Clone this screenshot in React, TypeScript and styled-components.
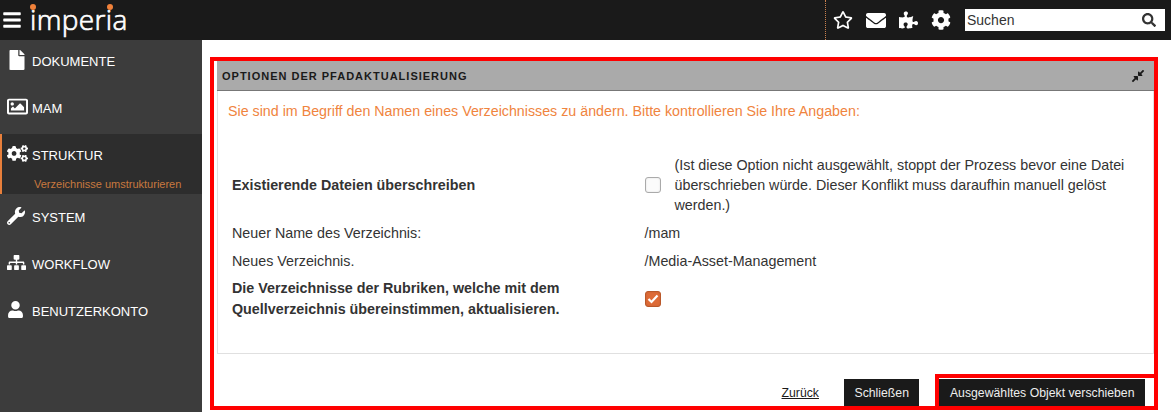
import React from "react";
import styled, { createGlobalStyle } from "styled-components";
import {
  FaBars, FaFile, FaRegImage, FaCogs, FaWrench, FaSitemap, FaUser, FaRegStar,
  FaEnvelope, FaPuzzlePiece, FaCog, FaSearch, FaCompressAlt,
} from "react-icons/fa";

const Global = createGlobalStyle`
  html, body { margin: 0; padding: 0; background: #fff; overflow: hidden; }
  body { font-family: "Liberation Sans", Arial, sans-serif; font-size: 14.3px; color: #333; }
`;
const Page = styled.div`width: 1171px; height: 412px; display: flex; flex-direction: column; overflow: hidden;`;
const TopBar = styled.header`
  height: 40px; flex: none; background: #1a1a1a; display: flex; align-items: center; color: #fff;
`;
const Burger = styled.div`width: 22px; margin-right: 8px; padding-left: 2px; box-sizing: border-box; display: flex; font-size: 20px;`;
const Logo = styled.div`
  position: relative; font-family: "Open Sans", sans-serif; font-weight: 300; font-size: 28px; line-height: 38px;
  letter-spacing: 0.35px; color: #fff; -webkit-text-stroke: 0.7px #fff; align-self: flex-start;
`;
const Dot = styled.i<{ $x: number }>`
  position: absolute; top: 4px; left: ${(p) => p.$x}px; width: 6px; height: 6px; border-radius: 50%; background: #f0813a;
`;
const Spacer = styled.div`flex: 1;`;
const Tools = styled.div`
  height: 40px; display: flex; align-items: center; border-left: 1px dotted #c9814f; padding-left: 7px; gap: 13px;
`;
const Tool = styled.span<{ $w: number }>`width: ${(p) => p.$w}px; display: flex; justify-content: center; font-size: 20px;`;
const Search = styled.div`
  margin: 0 6px 0 14px; width: 200px; height: 22px; background: #fff; display: flex; align-items: center;
  justify-content: space-between; padding: 0 9px 0 2px; box-sizing: border-box; color: #333; font-size: 14px;
`;
const Body = styled.div`flex: 1; display: flex; min-height: 0;`;
const Side = styled.nav`width: 202px; flex: none; background: #3c3c3c;`;
const Item = styled.div<{ $active?: boolean }>`
  height: ${(p) => (p.$active ? 60 : 47)}px; box-sizing: border-box; padding-top: 10px;
  margin-bottom: ${(p) => (p.$active ? 2 : 0)}px;
  background: ${(p) => (p.$active ? "#2d2d2d" : "transparent")};
  border-left: 2px solid ${(p) => (p.$active ? "#e87f3b" : "transparent")};
`;
const ItemRow = styled.div`
  display: flex; align-items: center; height: 22px; color: #fff; font-size: 13px; padding-left: 5px;
`;
const ItemIcon = styled.span<{ $size: number }>`
  width: 25px; display: flex; font-size: ${(p) => p.$size}px; margin-top: -3px; box-sizing: border-box;
`;
const Sub = styled.div`color: #c9793f; font-size: 11px; padding: 12px 0 0 32px; line-height: 13px;`;
const Main = styled.main`flex: 1; padding: 17px 13px 0 8px; min-width: 0;`;
const Frame = styled.section`
  border: 4px solid #f00; height: 353px; box-sizing: border-box; padding-left: 3px; display: flex; flex-direction: column;
`;
const Panel = styled.div`height: 293px; flex: none; border: 1px solid #e0e0e0; border-top: 0; box-sizing: border-box;`;
const PanelHead = styled.div`
  height: 30px; margin: 0 -1px; background: #aaa; border-bottom: 1px solid #777; box-sizing: border-box; display: flex;
  align-items: center; justify-content: space-between; padding: 0 9px 0 5px;
  font-size: 11px; font-weight: 700; letter-spacing: 1px; color: #1a1a1a;
`;
const Note = styled.p`margin: 0; padding: 12px 0 0 10px; color: #f0843e; font-size: 14.25px; line-height: 16px; height: 64px; box-sizing: border-box;`;
const Rows = styled.div`padding-left: 14px;`;
const Row = styled.div<{ $h: number; $gap?: number }>`
  display: grid; grid-template-columns: 412.5px 1fr; align-items: center; height: ${(p) => p.$h}px; margin-bottom: ${(p) => p.$gap ?? 0}px;
`;
const Label = styled.div<{ $bold?: boolean }>`font-weight: ${(p) => (p.$bold ? 700 : 400)}; line-height: 21px; color: #333;`;
const Value = styled.div`color: #333;`;
const Opt = styled.div`display: flex; align-items: center; gap: 13.5px;`;
const Check = styled.span<{ $on?: boolean }>`
  width: 16px; height: 16px; flex: none; margin-left: 0.5px; border-radius: 3px; box-sizing: border-box; display: flex; align-items: center; justify-content: center;
  border: 1px solid ${(p) => (p.$on ? "#b9582a" : "#aaa")}; background: ${(p) => (p.$on ? "#dd6b37" : "#fbfbfb")};
  box-shadow: inset 0 0 2px rgba(0,0,0,.12);
`;
const OptText = styled.div`width: 455px; line-height: 20px; color: #333;`;
const Footer = styled.div`flex: 1; display: flex; justify-content: flex-end; align-items: flex-end; padding-right: 9px; font-size: 12.25px;`;
const Back = styled.a`color: #1a1a1a; text-decoration: underline; margin: 0 25px 6px 0;`;
const Btn = styled.button`
  border: 0; background: #1a1a1a; color: #eee; font: 12.25px "Liberation Sans", Arial, sans-serif; height: 27px; padding: 0 10.5px; display: block;
`;
const Marked = styled.div`border: 4px solid #f00; border-bottom: 0; border-right: 0; margin-left: 16px; margin-right: -9px; padding: 1px 9px 0 0;`;

export default function App() {
  return (
    <Page>
      <Global />
      <TopBar>
        <Burger><FaBars /></Burger>
        <Logo>imperia<Dot $x={0} /><Dot $x={77} /></Logo>
        <Spacer />
        <Tools>
          <Tool $w={20}><FaRegStar /></Tool>
          <Tool $w={20}><FaEnvelope size={23} /></Tool>
          <Tool $w={19}><FaPuzzlePiece /></Tool>
          <Tool $w={20}><FaCog /></Tool>
        </Tools>
        <Search>Suchen<FaSearch size={14} /></Search>
      </TopBar>
      <Body>
        <Side>
          <Item><ItemRow><ItemIcon $size={20}><FaFile /></ItemIcon>DOKUMENTE</ItemRow></Item>
          <Item><ItemRow><ItemIcon $size={21}><FaRegImage /></ItemIcon>MAM</ItemRow></Item>
          <Item $active>
            <ItemRow><ItemIcon $size={21}><FaCogs /></ItemIcon>STRUKTUR</ItemRow>
            <Sub>Verzeichnisse umstrukturieren</Sub>
          </Item>
          <Item><ItemRow><ItemIcon $size={18}><FaWrench /></ItemIcon>SYSTEM</ItemRow></Item>
          <Item><ItemRow><ItemIcon $size={19}><FaSitemap /></ItemIcon>WORKFLOW</ItemRow></Item>
          <Item><ItemRow><ItemIcon $size={17}><FaUser /></ItemIcon>BENUTZERKONTO</ItemRow></Item>
        </Side>
        <Main>
          <Frame>
            <Panel>
              <PanelHead>OPTIONEN DER PFADAKTUALISIERUNG<FaCompressAlt size={14} /></PanelHead>
              <Note>Sie sind im Begriff den Namen eines Verzeichnisses zu ändern. Bitte kontrollieren Sie Ihre Angaben:</Note>
              <Rows>
                <Row $h={60} $gap={4}>
                  <Label $bold>Existierende Dateien überschreiben</Label>
                  <Opt>
                    <Check />
                    <OptText>(Ist diese Option nicht ausgewählt, stoppt der Prozess bevor eine Datei überschrieben würde. Dieser Konflikt muss daraufhin manuell gelöst werden.)</OptText>
                  </Opt>
                </Row>
                <Row $h={28}><Label>Neuer Name des Verzeichnis:</Label><Value>/mam</Value></Row>
                <Row $h={28}><Label>Neues Verzeichnis.</Label><Value>/Media-Asset-Management</Value></Row>
                <Row $h={48}>
                  <Label $bold>Die Verzeichnisse der Rubriken, welche mit dem<br />Quellverzeichnis übereinstimmen, aktualisieren.</Label>
                  <Opt>
                    <Check $on>
                      <svg width="12" height="10" viewBox="0 0 12 10"><path d="M1.5 5 L4.5 8 L10.5 1.5" fill="none" stroke="#fff" strokeWidth="2.2" /></svg>
                    </Check>
                  </Opt>
                </Row>
              </Rows>
            </Panel>
            <Footer>
              <Back>Zurück</Back>
              <Btn>Schließen</Btn>
              <Marked><Btn>Ausgewähltes Objekt verschieben</Btn></Marked>
            </Footer>
          </Frame>
        </Main>
      </Body>
    </Page>
  );
}
